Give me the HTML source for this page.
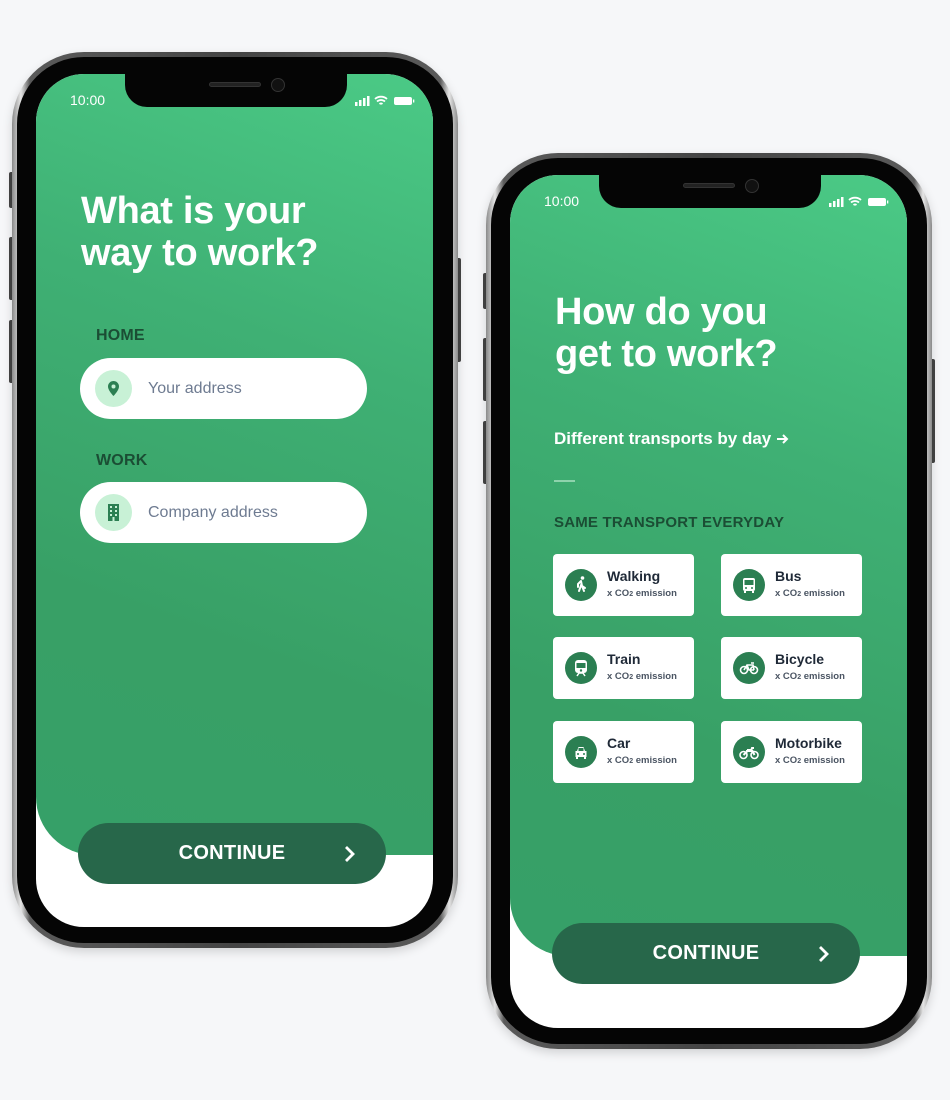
<!DOCTYPE html>
<html><head><meta charset="utf-8"><style>
*{margin:0;padding:0;box-sizing:border-box}
body{width:950px;height:1100px;background:#f6f7f9;position:relative;overflow:hidden;font-family:"Liberation Sans",sans-serif}
.phone{position:absolute;width:446px;height:896px}
.frame{position:absolute;inset:0;border-radius:72px;background:linear-gradient(90deg,#8a8a8a,#e6e6e6 2%,#5a5a5a 4%,#444 50%,#5a5a5a 96%,#e6e6e6 98%,#8a8a8a);box-shadow:0 4px 10px rgba(0,0,0,.15)}
.bezel{position:absolute;left:5px;top:5px;right:5px;bottom:5px;border-radius:67px;background:#050505}
.screen{position:absolute;left:24px;top:22px;width:397px;height:853px;border-radius:48px;background:#fff;overflow:hidden}
.green{position:absolute;left:0;top:0;width:397px;height:781px;background:linear-gradient(200deg,#4bca86 0%,#3fb074 35%,#38a066 70%,#36a068 100%);border-bottom-left-radius:58px}
.notch{position:absolute;left:89px;top:0;width:222px;height:33px;background:#050505;border-radius:0 0 22px 22px}
.spk{position:absolute;left:84px;top:8px;width:52px;height:5px;border-radius:3px;background:#222;border:1px solid #333}
.cam{position:absolute;left:146px;top:4px;width:14px;height:14px;border-radius:50%;background:#111;border:1px solid #333}
.time{position:absolute;left:34px;top:18px;color:#fff;font-size:14px}
.status{position:absolute;right:18px;top:21px}
.btn{position:absolute;left:42px;top:749px;width:308px;height:61px;border-radius:31px;background:#27674a;color:#fff;font-weight:bold;font-size:20px;line-height:61px;text-align:center;letter-spacing:.3px}
.chev{position:absolute;right:30px;top:22px}
.title{position:absolute;left:45px;top:116px;color:#fff;font-weight:bold;font-size:38px;line-height:42px;letter-spacing:-.3px}
.lbl{position:absolute;color:#1b4d34;font-weight:bold;font-size:16px;letter-spacing:.2px}
.inp{position:absolute;left:44px;width:287px;height:61px;border-radius:31px;background:#fff}
.inp .ic{position:absolute;left:15px;top:12px;width:37px;height:37px;border-radius:50%;background:#c8f1d6}
.inp .ph{position:absolute;left:68px;top:0;line-height:61px;color:#6e7b91;font-size:16px}
.side{position:absolute;width:5px;background:#444;border-radius:2px}
.card{position:absolute;width:141px;height:62px;background:#fff;border-radius:4px}
.card .ci{position:absolute;left:12px;top:15px;width:32px;height:32px;border-radius:50%;background:#2b7f52}
.card .t{position:absolute;left:54px;top:14px;color:#1f2937;font-size:14px;font-weight:bold}
.card .s{position:absolute;left:54px;top:34px;color:#4b5563;font-size:9.5px;font-weight:bold}
</style></head><body>

<div class="phone" style="left:12px;top:52px">
<div class="side" style="left:-3px;top:120px;height:36px"></div>
<div class="side" style="left:-3px;top:185px;height:63px"></div>
<div class="side" style="left:-3px;top:268px;height:63px"></div>
<div class="side" style="right:-3px;top:206px;height:104px"></div>
<div class="frame"></div><div class="bezel"></div>
<div class="screen">
<div class="green"></div>
<div class="notch"><div class="spk"></div><div class="cam"></div></div>
<div class="time">10:00</div>
<svg class="status" width="60" height="12" viewBox="0 0 60 12"><rect x="0" y="7" width="2.5" height="4" fill="#fff"/><rect x="4" y="5" width="2.5" height="6" fill="#fff"/><rect x="8" y="3" width="2.5" height="8" fill="#fff"/><rect x="12" y="1" width="2.5" height="10" fill="#fff"/><path d="M20 4a9 9 0 0 1 12 0M22 6.5a6 6 0 0 1 8 0M24.5 9a2.5 2.5 0 0 1 3 0" stroke="#fff" stroke-width="1.8" fill="none"/><rect x="39" y="2" width="18" height="8" rx="2" fill="#fff"/><rect x="58" y="4.5" width="1.3" height="3" fill="#fff"/></svg>
<div class="title">What is your<br>way to work?</div>
<div class="lbl" style="left:60px;top:253px">HOME</div>
<div class="inp" style="top:284px"><div class="ic"><svg width="37" height="37" viewBox="0 0 37 37"><path d="M18.5 11a5.5 5.5 0 0 0-5.5 5.5c0 4 5.5 9.5 5.5 9.5s5.5-5.5 5.5-9.5A5.5 5.5 0 0 0 18.5 11z" fill="#2b7f52"/><circle cx="18.5" cy="16.5" r="2" fill="#c8f1d6"/></svg></div><div class="ph">Your address</div></div>
<div class="lbl" style="left:60px;top:378px">WORK</div>
<div class="inp" style="top:408px"><div class="ic"><svg width="37" height="37" viewBox="0 0 37 37"><rect x="13" y="10" width="11" height="17" fill="#2b7f52"/><g fill="#c8f1d6"><rect x="15" y="12" width="2" height="2"/><rect x="20" y="12" width="2" height="2"/><rect x="15" y="16" width="2" height="2"/><rect x="20" y="16" width="2" height="2"/><rect x="15" y="20" width="2" height="2"/><rect x="20" y="20" width="2" height="2"/><rect x="17.5" y="23" width="2" height="4"/></g></svg></div><div class="ph">Company address</div></div>
<div class="btn">CONTINUE<svg class="chev" width="12" height="18" viewBox="0 0 12 18"><path d="M2 2l7 7-7 7" stroke="#fff" stroke-width="2.8" fill="none"/></svg></div>
</div>
</div>

<div class="phone" style="left:486px;top:153px">
<div class="side" style="left:-3px;top:120px;height:36px"></div>
<div class="side" style="left:-3px;top:185px;height:63px"></div>
<div class="side" style="left:-3px;top:268px;height:63px"></div>
<div class="side" style="right:-3px;top:206px;height:104px"></div>
<div class="frame"></div><div class="bezel"></div>
<div class="screen">
<div class="green"></div>
<div class="notch"><div class="spk"></div><div class="cam"></div></div>
<div class="time">10:00</div>
<svg class="status" width="60" height="12" viewBox="0 0 60 12"><rect x="0" y="7" width="2.5" height="4" fill="#fff"/><rect x="4" y="5" width="2.5" height="6" fill="#fff"/><rect x="8" y="3" width="2.5" height="8" fill="#fff"/><rect x="12" y="1" width="2.5" height="10" fill="#fff"/><path d="M20 4a9 9 0 0 1 12 0M22 6.5a6 6 0 0 1 8 0M24.5 9a2.5 2.5 0 0 1 3 0" stroke="#fff" stroke-width="1.8" fill="none"/><rect x="39" y="2" width="18" height="8" rx="2" fill="#fff"/><rect x="58" y="4.5" width="1.3" height="3" fill="#fff"/></svg>
<div class="title">How do you<br>get to work?</div>
<div style="position:absolute;left:44px;top:254px;color:#fff;font-weight:bold;font-size:17px">Different transports by day <svg width="13" height="12" viewBox="0 0 13 12" style="vertical-align:-1px"><path d="M1 6h10M7 2l4 4-4 4" stroke="#fff" stroke-width="2" fill="none"/></svg></div>
<div style="position:absolute;left:44px;top:305px;width:21px;height:2px;background:#8ed3ac"></div>
<div class="lbl" style="left:44px;top:339px;font-size:15px">SAME TRANSPORT EVERYDAY</div>

<div class="card" style="left:43px;top:379px"><div class="ci"><svg width="32" height="32" viewBox="0 0 32 32"><circle cx="17.5" cy="9" r="1.8" fill="#fff"/><path d="M16 12l-3 3v3M16 12l1 5 3 2M16.5 15l-2.5 7M17 17l2 5" stroke="#fff" stroke-width="2" fill="none" stroke-linecap="round"/></svg></div><div class="t">Walking</div><div class="s">x CO<sub style="font-size:7px;vertical-align:0">2</sub> emission</div></div>
<div class="card" style="left:211px;top:379px"><div class="ci"><svg width="32" height="32" viewBox="0 0 32 32"><rect x="10" y="9" width="12" height="13" rx="2" fill="#fff"/><rect x="11.5" y="11" width="9" height="5" fill="#2b7f52"/><circle cx="13" cy="19" r="1" fill="#2b7f52"/><circle cx="19" cy="19" r="1" fill="#2b7f52"/><rect x="11" y="22" width="2" height="2" fill="#fff"/><rect x="19" y="22" width="2" height="2" fill="#fff"/></svg></div><div class="t">Bus</div><div class="s">x CO<sub style="font-size:7px;vertical-align:0">2</sub> emission</div></div>
<div class="card" style="left:43px;top:462px"><div class="ci"><svg width="32" height="32" viewBox="0 0 32 32"><rect x="10" y="8" width="12" height="13" rx="3" fill="#fff"/><rect x="11.5" y="11" width="9" height="5" fill="#2b7f52"/><circle cx="16" cy="18.5" r="1.2" fill="#2b7f52"/><path d="M12 24l2-3h4l2 3" stroke="#fff" stroke-width="1.5" fill="none"/></svg></div><div class="t">Train</div><div class="s">x CO<sub style="font-size:7px;vertical-align:0">2</sub> emission</div></div>
<div class="card" style="left:211px;top:462px"><div class="ci"><svg width="32" height="32" viewBox="0 0 32 32"><circle cx="11" cy="18" r="3.5" stroke="#fff" stroke-width="1.6" fill="none"/><circle cx="21" cy="18" r="3.5" stroke="#fff" stroke-width="1.6" fill="none"/><path d="M11 18l3-5h6l1 5M14 13l2 5h5M18 11h3" stroke="#fff" stroke-width="1.6" fill="none"/></svg></div><div class="t">Bicycle</div><div class="s">x CO<sub style="font-size:7px;vertical-align:0">2</sub> emission</div></div>
<div class="card" style="left:43px;top:546px"><div class="ci"><svg width="32" height="32" viewBox="0 0 32 32"><path d="M12 15l1.5-4h5L20 15h1.5v6h-11v-6z" fill="#fff"/><rect x="13.5" y="12" width="5" height="3" fill="#2b7f52"/><circle cx="13" cy="18" r="1" fill="#2b7f52"/><circle cx="19" cy="18" r="1" fill="#2b7f52"/><rect x="11" y="21" width="2" height="2" fill="#fff"/><rect x="19" y="21" width="2" height="2" fill="#fff"/></svg></div><div class="t">Car</div><div class="s">x CO<sub style="font-size:7px;vertical-align:0">2</sub> emission</div></div>
<div class="card" style="left:211px;top:546px"><div class="ci"><svg width="32" height="32" viewBox="0 0 32 32"><circle cx="10.5" cy="19" r="3.5" stroke="#fff" stroke-width="1.6" fill="none"/><circle cx="21.5" cy="19" r="3.5" stroke="#fff" stroke-width="1.6" fill="none"/><path d="M10.5 19l4-4h5l2 4M13 15h5l1-3h2" stroke="#fff" stroke-width="2" fill="none"/><rect x="14" y="13" width="5" height="3" fill="#fff"/></svg></div><div class="t">Motorbike</div><div class="s">x CO<sub style="font-size:7px;vertical-align:0">2</sub> emission</div></div>

<div class="btn" style="top:748px">CONTINUE<svg class="chev" width="12" height="18" viewBox="0 0 12 18"><path d="M2 2l7 7-7 7" stroke="#fff" stroke-width="2.8" fill="none"/></svg></div>
</div>
</div>
</body></html>
